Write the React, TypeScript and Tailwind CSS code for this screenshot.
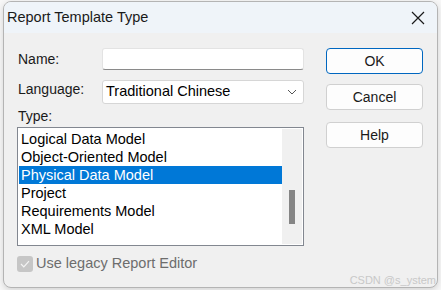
import React from "react";

const items = [
  "Logical Data Model",
  "Object-Oriented Model",
  "Physical Data Model",
  "Project",
  "Requirements Model",
  "XML Model",
];

const App = () => {
  return (
    <div className="w-[441px] h-[290px] bg-[#f7f7f7] pl-[3px] pt-[1px] overflow-hidden font-['Liberation_Sans',Arial,sans-serif]">
      <div className="w-[435px] h-[287px] rounded-[8px] border border-[#b4b4b4] bg-[#f0f0f0] overflow-hidden flex flex-col shadow-[0_2px_6px_rgba(0,0,0,0.15)]">
        {/* title bar */}
        <div className="h-[31px] bg-[#eff4f9] flex flex-row items-center justify-between pl-[3px] pr-[12px] shrink-0">
          <p className="text-[14.5px] text-[#1a1a1a]">Report Template Type</p>
          <svg width="14" height="14" viewBox="0 0 14 14">
            <path d="M1 1L13 13M13 1L1 13" stroke="#1a1a1a" strokeWidth="1.2" />
          </svg>
        </div>

        <div className="flex flex-row pl-[13px] pt-[15px] gap-[21px] relative flex-1">
          {/* left column */}
          <div className="w-[288px] flex flex-col text-[14px] text-[#1a1a1a]">
            <div className="flex flex-row items-center h-[22px]">
              <p className="w-[85px] pl-[1px]">Name:</p>
              <div className="w-[202px] h-[22px] bg-white border border-[#e3e3e3] border-b-[#8a8a8a] rounded-[3px]" />
            </div>
            <div className="flex flex-row items-center h-[24px] mt-[10px]">
              <p className="w-[85px] pl-[1px] -mt-[6px]">Language:</p>
              <div className="w-[202px] h-[24px] bg-white border border-[#d6d6d6] rounded-[3px] flex flex-row items-center justify-between pl-[3px] pr-[6px]">
                <p className="text-[14.5px] text-black">Traditional Chinese</p>
                <svg width="10" height="6" viewBox="0 0 10 6">
                  <path d="M1 1L5 5L9 1" stroke="#555" strokeWidth="1" fill="none" />
                </svg>
              </div>
            </div>
            <p className="pl-[1px] mt-[4px] leading-[17px]">Type:</p>
            <div className="mt-[2px] w-[287px] h-[119px] bg-white border border-[#828790] flex flex-row p-[1px]">
              <div className="flex-1 flex flex-col pt-[1px]">
                {items.map((it) => (
                  <p
                    key={it}
                    className={
                      it === "Physical Data Model"
                        ? "h-[18px] leading-[18px] pl-[2px] bg-[#0078d7] text-white text-[14.5px]"
                        : "h-[18px] leading-[18px] pl-[2px] text-black text-[14.5px]"
                    }
                  >
                    {it}
                  </p>
                ))}
              </div>
              <div className="w-[20px] bg-[#f0f0f0] flex flex-col items-center pt-[61px]">
                <div className="w-[6px] h-[34px] bg-[#858585]" />
              </div>
            </div>
            <div className="flex flex-row items-center mt-[7px] gap-[3px]">
              <div className="w-[16px] h-[16px] rounded-[3px] bg-[#c6c6c6] flex items-center justify-center">
                <svg width="10" height="8" viewBox="0 0 10 8">
                  <path d="M1 4L3.8 6.8L9 1.2" stroke="#f4f4f4" strokeWidth="1.2" fill="none" />
                </svg>
              </div>
              <p className="text-[14.5px] text-[#6d6d6d]">Use legacy Report Editor</p>
            </div>
          </div>

          {/* buttons */}
          <div className="w-[97px] flex flex-col gap-[10px] text-[14px] text-[#1a1a1a]">
            <button className="h-[26px] rounded-[4px] border border-[#0067c0] bg-[#fdfdfd]">OK</button>
            <button className="h-[26px] rounded-[4px] border border-[#d0d0d0] bg-[#fdfdfd]">Cancel</button>
            <button className="h-[26px] rounded-[4px] border border-[#d0d0d0] bg-[#fdfdfd] mt-[2px]">Help</button>
          </div>

          <p className="absolute right-[1px] -bottom-[1px] text-[11px] text-[#c8c8c8]">CSDN @s_ystem</p>
        </div>
      </div>
    </div>
  );
};

export default App;
